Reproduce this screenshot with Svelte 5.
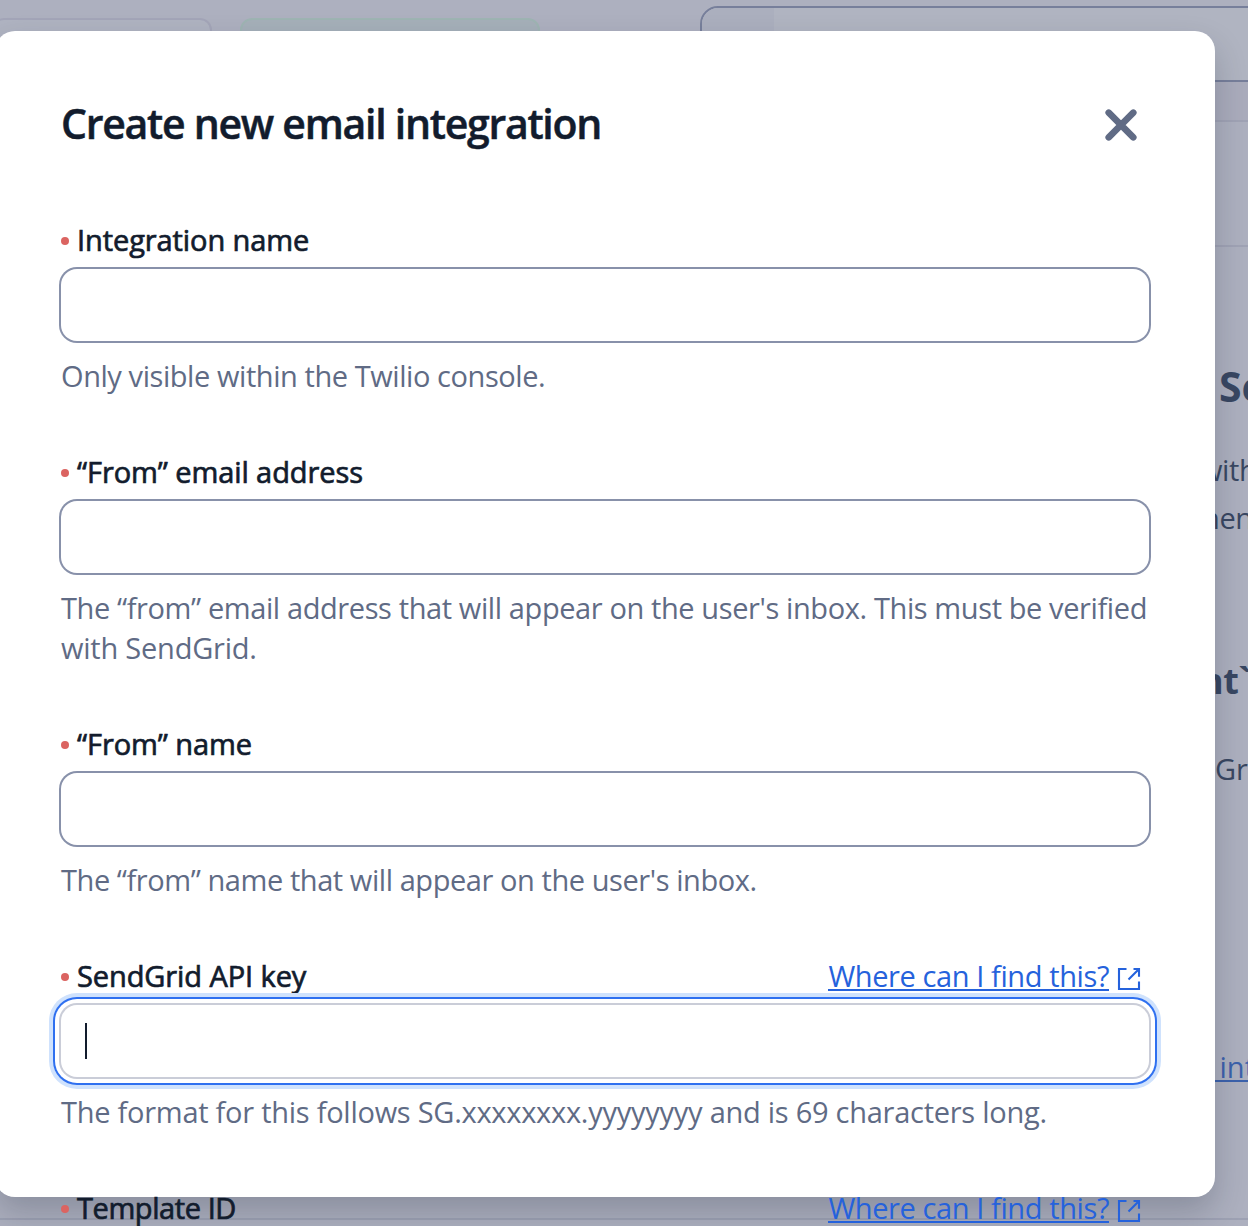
<script>
  const fields = [
    { id: 'name', label: 'Integration name', help: ['Only visible within the Twilio console.'] },
    {
      id: 'from-email',
      label: '“From” email address',
      help: [
        "The “from” email address that will appear on the user's inbox. This must be verified",
        'with SendGrid.'
      ]
    },
    { id: 'from-name', label: '“From” name', help: ["The “from” name that will appear on the user's inbox."] },
    {
      id: 'api-key',
      label: 'SendGrid API key',
      help: ['The format for this follows SG.xxxxxxxx.yyyyyyyy and is 69 characters long.'],
      link: true,
      focused: true
    },
    { id: 'template', label: 'Template ID', help: [], link: true }
  ];
</script>

<div class="screen">
  <div class="page">
    <div class="toolbar">
      <div class="chip"></div>
      <div class="chip green"></div>
      <div class="search"><span class="prefix"></span></div>
    </div>
    <div class="strip"></div>
    <div class="band"></div>
    <div class="content">
      <h2 class="heading-a">Se</h2>
      <p class="line-a">with</p>
      <p class="line-b">hen</p>
      <h3 class="heading-b">nt`</h3>
      <p class="line-c">Gr</p>
      <p class="line-d"><span class="page-link">&nbsp;int</span></p>
    </div>
  </div>

  <div class="modal" role="dialog" aria-label="Create new email integration">
    <header>
      <h1>Create new email integration</h1>
      <button class="close" aria-label="Close">
        <svg width="34" height="34" viewBox="0 0 34 34" fill="none" stroke="#606b85" stroke-width="6.6" stroke-linecap="round">
          <path d="M4.7 4.7L29.3 29.3M29.3 4.7L4.7 29.3" />
        </svg>
      </button>
    </header>

    {#each fields as f (f.id)}
      <section class="field {f.id}">
        <div class="label-row">
          <label for={f.id}><i class="dot"></i><span>{f.label}</span></label>
          {#if f.link}
            <span class="find">
              <span class="find-text">Where can I find this?</span>
              <svg width="24" height="24" viewBox="0 0 24 24" fill="none" stroke="#2562dc" stroke-width="2.1">
                <path d="M9.5 2H2V22H22V14.5M16.5 2H22V9.7M22 2L11.5 12.5" />
              </svg>
            </span>
          {/if}
        </div>
        {#if f.help.length}
          <div class="input" class:focused={f.focused} id={f.id}>
            {#if f.focused}<span class="caret"></span>{/if}
          </div>
          <p class="help">
            {#each f.help as line}<span>{line}</span>{/each}
          </p>
        {/if}
      </section>
    {/each}
  </div>
</div>

<style>
  :global(body) {
    margin: 0;
    overflow: hidden;
  }

  h1, h2, h3, p {
    margin: 0;
  }

  .screen {
    position: relative;
    width: 1248px;
    height: 1226px;
    overflow: hidden;
    background: #adb0bf;
    font: 400 29px/40px 'Open Sans', 'Noto Sans', sans-serif;
    color: #394762;
    white-space: nowrap;
  }

  /* dimmed page behind the dialog */
  .page {
    display: flex;
    flex-direction: column;
    height: 1226px;
  }

  .toolbar {
    display: flex;
    align-items: flex-start;
    height: 82px;
    box-sizing: border-box;
    padding-top: 6px;
  }

  .chip {
    box-sizing: border-box;
    width: 220px;
    height: 64px;
    margin: 12px 28px 0 -8px;
    flex: none;
    border: 2px solid #a3a5b8;
    border-radius: 12px;
    background: #afb3c1;
  }

  .chip.green {
    width: 300px;
    margin: 12px 160px 0 0;
    border-color: #9eb4b3;
    background: #a5b0b9;
  }

  .search {
    box-sizing: border-box;
    display: flex;
    flex: none;
    width: 600px;
    height: 76px;
    overflow: hidden;
    border: 2px solid #777f9b;
    border-radius: 18px;
    background: #b0b4c1;
  }

  .prefix {
    width: 72px;
    background: #abafbe;
  }

  .strip {
    height: 38px;
    background: #aaacbc;
    border-bottom: 2px solid #a0a3b5;
  }

  .band {
    height: 123px;
    border-bottom: 2px solid #a0a3b5;
  }

  .content {
    display: flex;
    flex-direction: column;
    box-sizing: border-box;
    height: 973px;
    padding: 111px 0 0 1200px;
    border-bottom: 2px solid #9da1b3;
  }

  .heading-a {
    padding-left: 19px;
    font: 700 41px/56px 'Open Sans', sans-serif;
  }

  .line-a {
    margin-top: 36px;
    letter-spacing: -0.4px;
  }

  .line-b {
    margin-top: 8px;
    padding-left: 2px;
    letter-spacing: -0.4px;
  }

  .heading-b {
    margin-top: 115px;
    padding-left: -2px;
    font: 700 36px/56px 'Open Sans', sans-serif;
    letter-spacing: -0.5px;
  }

  .line-c {
    margin-top: 40px;
    padding-left: 15px;
  }

  .line-d {
    margin-top: 258px;
    padding-left: 12px;
    color: #3c62ac;
  }

  .page-link {
    display: inline-block;
    height: 33px;
    border-bottom: 2px solid #3c62ac;
  }

  .modal {
    position: absolute;
    top: 31px;
    left: -5px;
    width: 1220px;
    height: 1166px;
    box-sizing: border-box;
    padding: 64px 66px 0;
    border-radius: 20px;
    background: #fff;
    box-shadow: 0 16px 32px rgba(18, 28, 45, 0.22);
    color: #121c2d;
  }

  header {
    display: flex;
    justify-content: space-between;
    align-items: center;
    height: 56px;
    margin-bottom: 69px;
  }

  h1 {
    font-size: 41px;
    font-weight: 600;
    line-height: 56px;
    letter-spacing: -1.27px;
    -webkit-text-stroke: 0.5px #121c2d;
  }

  .close {
    display: flex;
    padding: 0;
    margin: 3px 11px 0 0;
    border: 0;
    background: none;
  }

  .field {
    display: flex;
    flex-direction: column;
    margin-bottom: 56px;
  }

  .label-row {
    display: flex;
    justify-content: space-between;
    height: 40px;
  }

  label {
    display: flex;
    align-items: center;
    gap: 8px;
    letter-spacing: -0.09px;
    -webkit-text-stroke: 0.7px #121c2d;
  }

  .template label {
    letter-spacing: -0.42px;
  }

  .dot {
    width: 8px;
    height: 8px;
    margin-top: 1px;
    border-radius: 50%;
    background: #db6461;
  }

  .find {
    display: flex;
    gap: 8px;
    margin-right: 8px;
    color: #2562dc;
    letter-spacing: -0.4px;
  }

  .find-text {
    height: 33px;
    border-bottom: 2px solid #2562dc;
  }

  .find svg {
    margin-top: 11px;
  }

  .input {
    display: flex;
    align-items: center;
    height: 72px;
    margin-top: 9px;
    border-radius: 16px;
    background: #fff;
    box-shadow: 0 0 0 2px #8891aa;
  }

  .focused {
    box-shadow:
      0 0 0 2px #cacdd8,
      0 0 0 6px #fff,
      0 0 0 8px #2f70f0,
      0 0 0 12px #cfe2fd;
  }

  .caret {
    width: 2px;
    height: 36px;
    margin-left: 24px;
    background: #121c2d;
  }

  .help {
    display: flex;
    flex-direction: column;
    margin-top: 15px;
    color: #606b85;
    letter-spacing: -0.43px;
  }

  .from-email .help {
    letter-spacing: -0.395px;
  }

  .from-email .help span:last-child {
    letter-spacing: -0.22px;
  }

  .api-key .help {
    letter-spacing: -0.26px;
  }
</style>
